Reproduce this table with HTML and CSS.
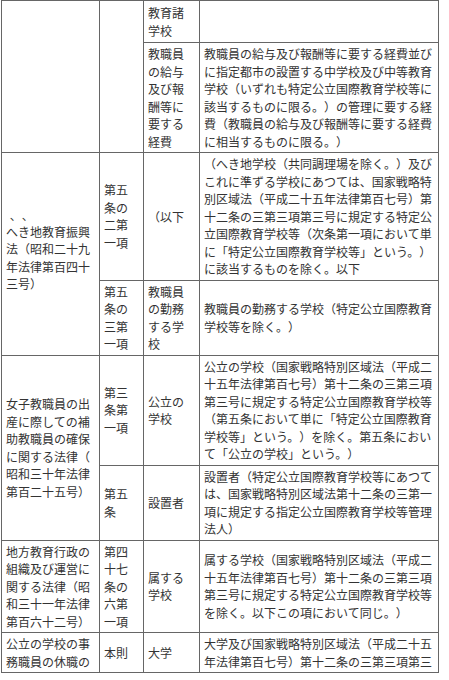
FILE: index.html
```html
<!DOCTYPE html>
<html lang="ja">
<head>
<meta charset="utf-8">
<title>法令対照表</title>
<link rel="stylesheet" href="styles.css">
</head>
<body>
<table class="law">
  <colgroup>
    <col class="c1"><col class="c2"><col class="c3"><col class="c4">
  </colgroup>
  <tr>
    <td rowspan="2"></td>
    <td rowspan="2"></td>
    <td class="first">教育諸学校</td>
    <td class="first"></td>
  </tr>
  <tr>
    <td>教職員の給与及び報酬等に要する経費</td>
    <td>教職員の給与及び報酬等に要する経費並びに指定都市の設置する中学校及び中等教育学校（いずれも特定公立国際教育学校等に該当するものに限る。）の管理に要する経費（教職員の給与及び報酬等に要する経費に相当するものに限る。）</td>
  </tr>
  <tr>
    <td rowspan="2"><ruby>へ<rt lang="zh-TW">、</rt></ruby><ruby>き<rt lang="zh-TW">、</rt></ruby>地教育振興法（昭和二十九年法律第百四十三号）</td>
    <td>第五条の二第一項</td>
    <td>（以下</td>
    <td>（へき地学校（共同調理場を除く。）及びこれに準ずる学校にあつては、国家戦略特別区域法（平成二十五年法律第百七号）第十二条の三第三項第三号に規定する特定公立国際教育学校等（次条第一項において単に「特定公立国際教育学校等」という。）に該当するものを除く。以下</td>
  </tr>
  <tr>
    <td>第五条の三第一項</td>
    <td>教職員の勤務する学校</td>
    <td>教職員の勤務する学校（特定公立国際教育学校等を除く。）</td>
  </tr>
  <tr>
    <td rowspan="2">女子教職員の出産に際しての補助教職員の確保に関する法律（<br>昭和三十年法律第百二十五号）</td>
    <td>第三条第一項</td>
    <td>公立の学校</td>
    <td>公立の学校（国家戦略特別区域法（平成二十五年法律第百七号）第十二条の三第三項第三号に規定する特定公立国際教育学校等（第五条において単に「特定公立国際教育学校等」という。）を除く。第五条において「公立の学校」という。）</td>
  </tr>
  <tr>
    <td>第五条</td>
    <td>設置者</td>
    <td>設置者（特定公立国際教育学校等にあつては、国家戦略特別区域法第十二条の三第一項に規定する指定公立国際教育学校等管理法人）</td>
  </tr>
  <tr>
    <td>地方教育行政の組織及び運営に関する法律（昭和三十一年法律第百六十二号）</td>
    <td>第四十七条の六第一項</td>
    <td>属する学校</td>
    <td>属する学校（国家戦略特別区域法（平成二十五年法律第百七号）第十二条の三第三項第三号に規定する特定公立国際教育学校等を除く。以下この項において同じ。）</td>
  </tr>
  <tr>
    <td><div class="clip">公立の学校の事務職員の休職の特例に関する法律（昭和三十二年法律第百十七号）</div></td>
    <td>本則</td>
    <td>大学</td>
    <td><div class="clip">大学及び国家戦略特別区域法（平成二十五年法律第百七号）第十二条の三第三項第三号に規定する特定公立国際教育学校等</div></td>
  </tr>
</table>
</body>
</html>
```

FILE: styles.css
```css
html, body {
  margin: 0;
  background: #fff;
}
body {
  padding-left: 1px;
}
.law {
  border-collapse: separate;
  border-spacing: 0;
  table-layout: fixed;
  width: 438px;
  border-top: 1px solid #666;
  border-left: 1px solid #666;
  font-family: "Noto Sans CJK JP", "Noto Sans", sans-serif;
  font-size: 12px;
  line-height: 17.5px;
  color: #333;
  text-spacing-trim: space-all;
}
.c1 { width: 98px; }
.c2 { width: 44px; }
.c3 { width: 56px; }
.c4 { width: 239px; }
.law td {
  border-right: 1px solid #666;
  border-bottom: 1px solid #666;
  padding: 2px 4px;
  vertical-align: middle;
  word-break: break-all;
  line-break: anywhere;
}
.law td.first {
  box-sizing: border-box;
  height: 42px;
}
.law rt {
  font-family: "Noto Sans CJK TC", "Noto Sans CJK JP", sans-serif;
  font-size: 12px;
  line-height: 10px;
}
.clip {
  height: 35px;
  overflow: hidden;
}
```
